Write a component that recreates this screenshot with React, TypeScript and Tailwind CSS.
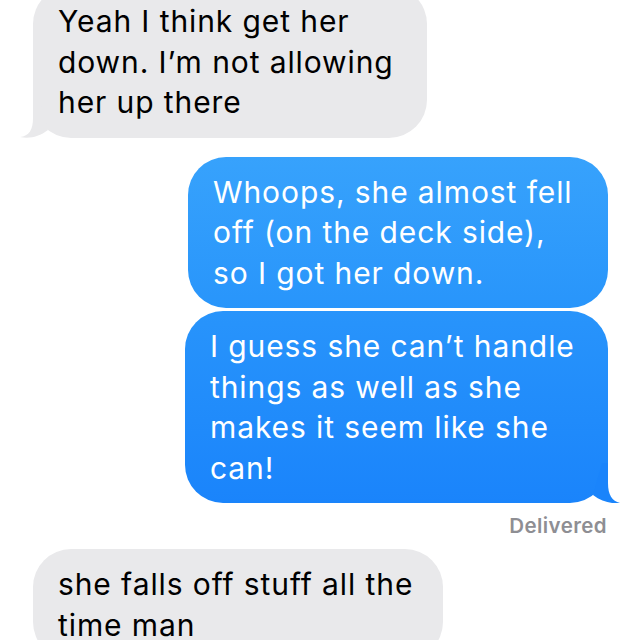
const font = { fontFamily: 'Inter, "Noto Sans", sans-serif' }

function Tail({ side, color }: { side: 'left' | 'right'; color: string }) {
  if (side === 'right') {
    return (
      <svg className="absolute bottom-0 right-[-12px]" width="40" height="40" viewBox="-28 -40 40 40">
        <path d="M -6 -40 L 0 -40 L 0 -20 C 0 -8 4 -2 12 0 C 4 1 -6 -1 -15 -8 L -6 -40 Z" fill={color} />
      </svg>
    )
  }
  return (
    <svg className="absolute bottom-0 left-[-13px]" width="40" height="40" viewBox="-13 -40 40 40">
      <path d="M 6 -40 L 0 -40 L 0 -20 C 0 -8 -4 -2 -13 -1 C -4 1 6 -1 15 -8 L 6 -40 Z" fill={color} />
    </svg>
  )
}

function Lines({ lines }: { lines: string[] }) {
  return (
    <>
      {lines.map((l, i) => (
        <div key={i} className="whitespace-nowrap">
          {l}
        </div>
      ))}
    </>
  )
}

export default function App() {
  return (
    <div className="w-[640px] h-[640px] overflow-hidden bg-white" style={font}>
      <div className="flex flex-col mt-[-14px] text-[30px] leading-[40.5px] tracking-[0.9px]">
        <div className="relative ml-[33px] w-[394px] rounded-[38px] bg-[#e9e9eb] px-[25px] py-[15px] text-black">
          <Lines lines={['Yeah I think get her', 'down. I\u2019m not allowing', 'her up there']} />
          <Tail side="left" color="#e9e9eb" />
        </div>

        <div className="mt-[19px] self-end mr-[32px] w-[420px] rounded-[38px] bg-gradient-to-b from-[#37a2fc] to-[#2895fb] px-[25px] py-[15px] text-white">
          <Lines lines={['Whoops, she almost fell', 'off (on the deck side),', 'so I got her down.']} />
        </div>

        <div className="relative mt-[3px] self-end mr-[32px] w-[423px] rounded-[38px] bg-gradient-to-b from-[#2894fb] to-[#1a84fb] px-[25px] py-[15px] text-white">
          <Lines
            lines={['I guess she can\u2019t handle', 'things as well as she', 'makes it seem like she', 'can!']}
          />
          <Tail side="right" color="#1a84fb" />
        </div>

        <div className="mt-[12px] mr-[33px] text-right text-[20.5px] leading-[22px] font-semibold tracking-[0.4px] text-[#8e8e93]">
          Delivered
        </div>

        <div className="relative mt-[12px] ml-[33px] w-[410px] rounded-[38px] bg-[#e9e9eb] px-[25px] py-[15px] text-black">
          <Lines lines={['she falls off stuff all the', 'time man']} />
        </div>
      </div>
    </div>
  )
}
